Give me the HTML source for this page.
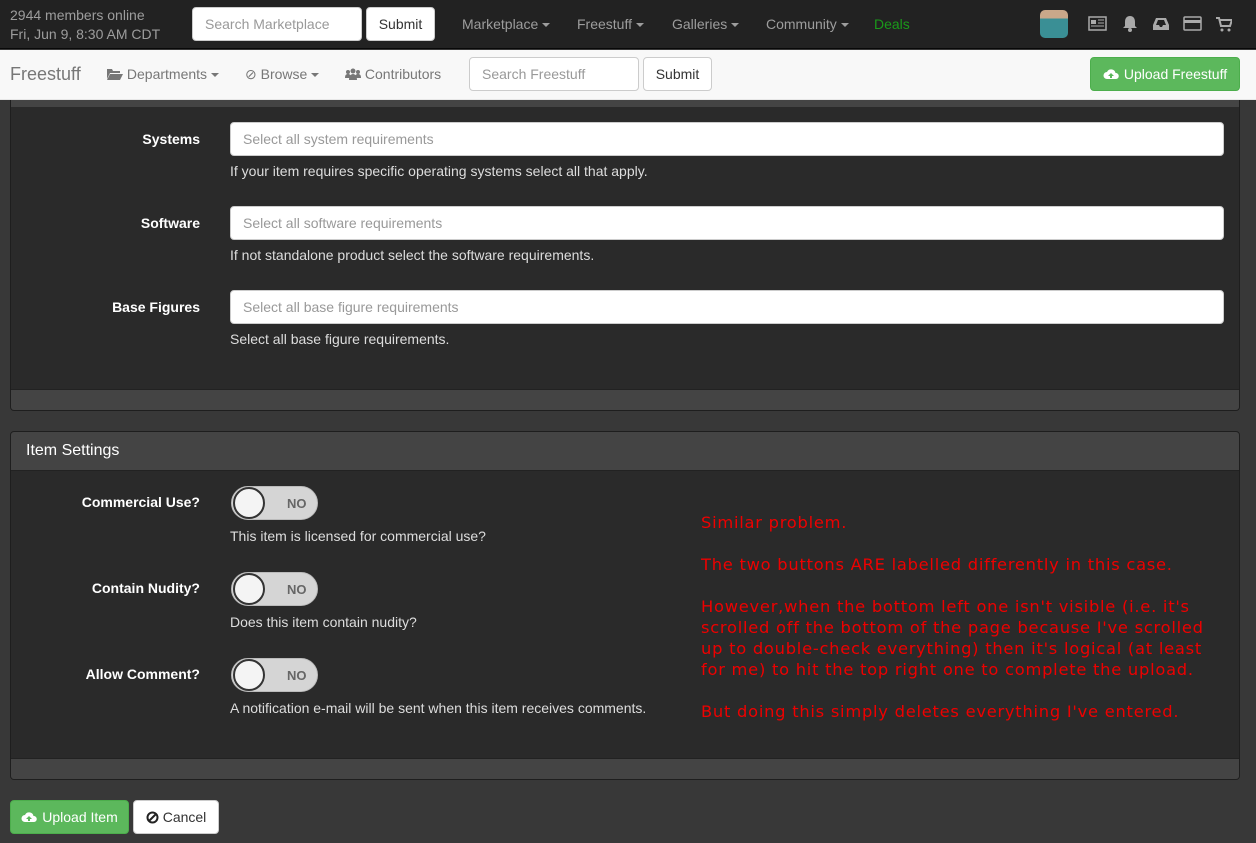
<!DOCTYPE html>
<html><head><meta charset="utf-8"><style>
*{box-sizing:border-box;margin:0;padding:0}
body{width:1256px;height:843px;overflow:hidden;background:#383838;font-family:"Liberation Sans",Arial,sans-serif;font-size:14px;color:#ddd;position:relative}
.a{position:absolute}
.top{left:0;top:0;width:1256px;height:49px;background:#222;border-bottom:1px solid #080808}
.nav2{left:0;top:50px;width:1256px;height:50px;background:#f8f8f8;border-bottom:1px solid #e7e7e7}
.inp{background:#fff;border:1px solid #ccc;border-radius:4px;color:#999;font-size:14px;padding:0 12px;display:flex;align-items:center}
.btn{background:#fff;border:1px solid #ccc;border-radius:4px;color:#333;font-size:14px;display:flex;align-items:center;justify-content:center}
.gbtn{background:#5cb85c;border:1px solid #4cae4c;border-radius:4px;color:#fff;font-size:14px;display:flex;align-items:center;justify-content:center;gap:5px}
.nl{color:#9d9d9d;font-size:14px}
.n2{color:#777;font-size:14px}
.car{display:inline-block;width:0;height:0;border-left:4px solid transparent;border-right:4px solid transparent;border-top:4px solid currentColor;vertical-align:middle;margin-left:4px}
.lbl{color:#fff;font-weight:bold;font-size:14px;text-align:right;width:190px;left:10px}
.help{color:#ddd;font-size:14px;left:230px}
.sel{left:230px;width:994px;height:34px}
.tog{left:231px;width:87px;height:34px;border-radius:17px;background:#d5d5d5;border:1px solid #bbb}
.tog .k{position:absolute;left:1px;top:0;width:32px;height:32px;border-radius:50%;background:#f4f4f4;border:2px solid #333}
.tog span{position:absolute;left:55px;top:9px;font-weight:bold;font-size:13px;color:#666}
.red{left:701px;color:#ee0000;font-family:"DejaVu Sans",sans-serif;font-size:16.3px;letter-spacing:0.75px;line-height:21px;white-space:pre}
</style></head><body>
<div class="a top"></div>
<div class="a" style="left:10px;top:6px;color:#9d9d9d;font-size:14px;line-height:19px">2944 members online<br>Fri, Jun 9, 8:30 AM CDT</div>
<div class="a inp" style="left:192px;top:7px;width:170px;height:34px">Search Marketplace</div>
<div class="a btn" style="left:366px;top:7px;width:69px;height:34px">Submit</div>
<div class="a nl" style="left:462px;top:16px">Marketplace<span class="car"></span></div>
<div class="a nl" style="left:577px;top:16px">Freestuff<span class="car"></span></div>
<div class="a nl" style="left:672px;top:16px">Galleries<span class="car"></span></div>
<div class="a nl" style="left:766px;top:16px">Community<span class="car"></span></div>
<div class="a" style="left:874px;top:16px;color:#1a9a1a">Deals</div>
<div class="a" style="left:1040px;top:10px;width:28px;height:28px;border-radius:5px;background:linear-gradient(#c9a88a 0 30%,#3a8f95 30%)"></div>
<svg class="a" style="left:1088px;top:16px" width="19" height="15" viewBox="0 0 19 15"><rect x="1" y="1" width="17" height="13" fill="none" stroke="#aaa" stroke-width="1.5"/><rect x="3" y="4" width="5" height="4" fill="#aaa"/><path d="M10 4h6M10 7h6M3 10h13" stroke="#aaa"/></svg>
<svg class="a" style="left:1122px;top:15px" width="16" height="17" viewBox="0 0 16 17"><path d="M8 1c-3 0-5 2-5 6v4l-2 2h14l-2-2V7c0-4-2-6-5-6z" fill="#aaa"/><circle cx="8" cy="15" r="2" fill="#aaa"/></svg>
<svg class="a" style="left:1153px;top:17px" width="16" height="14" viewBox="0 0 16 14"><path d="M3 1h10l3 7v5H0V8z" fill="#aaa"/><path d="M3 8h3l1 2h2l1-2h3L11 3H5z" fill="#222"/></svg>
<svg class="a" style="left:1183px;top:16px" width="19" height="15" viewBox="0 0 19 15"><rect x="1" y="1" width="17" height="13" rx="1" fill="none" stroke="#aaa" stroke-width="1.5"/><rect x="1" y="4" width="17" height="3" fill="#aaa"/></svg>
<svg class="a" style="left:1216px;top:17px" width="16" height="15" viewBox="0 0 16 15"><path d="M0 1h3l2 8h9l2-6H4" fill="none" stroke="#aaa" stroke-width="2"/><circle cx="6" cy="13" r="1.5" fill="#aaa"/><circle cx="13" cy="13" r="1.5" fill="#aaa"/></svg>

<div class="a nav2"></div>
<div class="a" style="left:10px;top:64px;color:#777;font-size:18px">Freestuff</div>
<div class="a n2" style="left:107px;top:66px"><svg width="16" height="12" viewBox="0 0 16 12" style="vertical-align:-1px"><path d="M0 1h5l1 2h7v2H3L0 11z" fill="#777"/><path d="M3 6h13l-3 6H0z" fill="#777"/></svg> Departments<span class="car"></span></div>
<div class="a n2" style="left:245px;top:66px">&#8856; Browse<span class="car"></span></div>
<div class="a n2" style="left:345px;top:66px"><svg width="16" height="12" viewBox="0 0 16 12" style="vertical-align:-1px"><circle cx="8" cy="3" r="2.5" fill="#777"/><circle cx="3" cy="4" r="2" fill="#777"/><circle cx="13" cy="4" r="2" fill="#777"/><path d="M4 12c0-4 2-6 4-6s4 2 4 6zM0 10c0-3 1-4 3-4s3 1 3 4zM10 10c0-3 1-4 3-4s3 1 3 4z" fill="#777"/></svg> Contributors</div>
<div class="a inp" style="left:469px;top:57px;width:170px;height:34px">Search Freestuff</div>
<div class="a btn" style="left:643px;top:57px;width:69px;height:34px">Submit</div>
<div class="a gbtn" style="left:1090px;top:57px;width:150px;height:34px"><svg width="16" height="12" viewBox="0 0 16 12"><path d="M4 11a3.5 3.5 0 0 1 0-7 4.5 4.5 0 0 1 8.5 1A3 3 0 0 1 13 11z" fill="#fff"/><path d="M8 5l-3 3h2v2h2V8h2z" fill="#5cb85c"/></svg>Upload Freestuff</div>

<div class="a" style="left:10px;top:100px;width:1230px;height:311px;background:#2a2a2a;border:1px solid #1e1e1e;border-top:none;border-radius:0 0 4px 4px;overflow:hidden">
<div style="height:7px;background:#444"></div>
<div class="a" style="left:0;bottom:0;width:100%;height:21px;background:#444;border-top:1px solid #222"></div>
</div>
<div class="a lbl" style="top:131px">Systems</div>
<div class="a inp sel" style="top:122px">Select all system requirements</div>
<div class="a help" style="top:163px">If your item requires specific operating systems select all that apply.</div>
<div class="a lbl" style="top:215px">Software</div>
<div class="a inp sel" style="top:206px">Select all software requirements</div>
<div class="a help" style="top:247px">If not standalone product select the software requirements.</div>
<div class="a lbl" style="top:299px">Base Figures</div>
<div class="a inp sel" style="top:290px">Select all base figure requirements</div>
<div class="a help" style="top:331px">Select all base figure requirements.</div>

<div class="a" style="left:10px;top:431px;width:1230px;height:349px;background:#2a2a2a;border:1px solid #1e1e1e;border-radius:4px;overflow:hidden">
<div style="height:39px;background:#444;border-bottom:1px solid #222;color:#fff;font-size:16px;padding:10px 15px">Item Settings</div>
<div class="a" style="left:0;bottom:0;width:100%;height:21px;background:#444;border-top:1px solid #222"></div>
</div>
<div class="a lbl" style="top:494px">Commercial Use?</div>
<div class="a tog" style="top:486px"><div class="k"></div><span>NO</span></div>
<div class="a help" style="top:528px">This item is licensed for commercial use?</div>
<div class="a lbl" style="top:580px">Contain Nudity?</div>
<div class="a tog" style="top:572px"><div class="k"></div><span>NO</span></div>
<div class="a help" style="top:614px">Does this item contain nudity?</div>
<div class="a lbl" style="top:666px">Allow Comment?</div>
<div class="a tog" style="top:658px"><div class="k"></div><span>NO</span></div>
<div class="a help" style="top:700px">A notification e-mail will be sent when this item receives comments.</div>

<div class="a red" style="top:512px">Similar problem.

The two buttons ARE labelled differently in this case.

However,when the bottom left one isn't visible (i.e. it's
scrolled off the bottom of the page because I've scrolled
up to double-check everything) then it's logical (at least
for me) to hit the top right one to complete the upload.

But doing this simply deletes everything I've entered.</div>

<div class="a gbtn" style="left:10px;top:800px;width:119px;height:34px"><svg width="16" height="12" viewBox="0 0 16 12"><path d="M4 11a3.5 3.5 0 0 1 0-7 4.5 4.5 0 0 1 8.5 1A3 3 0 0 1 13 11z" fill="#fff"/><path d="M8 5l-3 3h2v2h2V8h2z" fill="#5cb85c"/></svg>Upload Item</div>
<div class="a btn" style="left:133px;top:800px;width:86px;height:34px;gap:4px"><svg width="13" height="13" viewBox="0 0 13 13"><circle cx="6.5" cy="6.5" r="5" fill="none" stroke="#222" stroke-width="2"/><path d="M3 10L10 3" stroke="#222" stroke-width="2"/></svg>Cancel</div>
</body></html>
